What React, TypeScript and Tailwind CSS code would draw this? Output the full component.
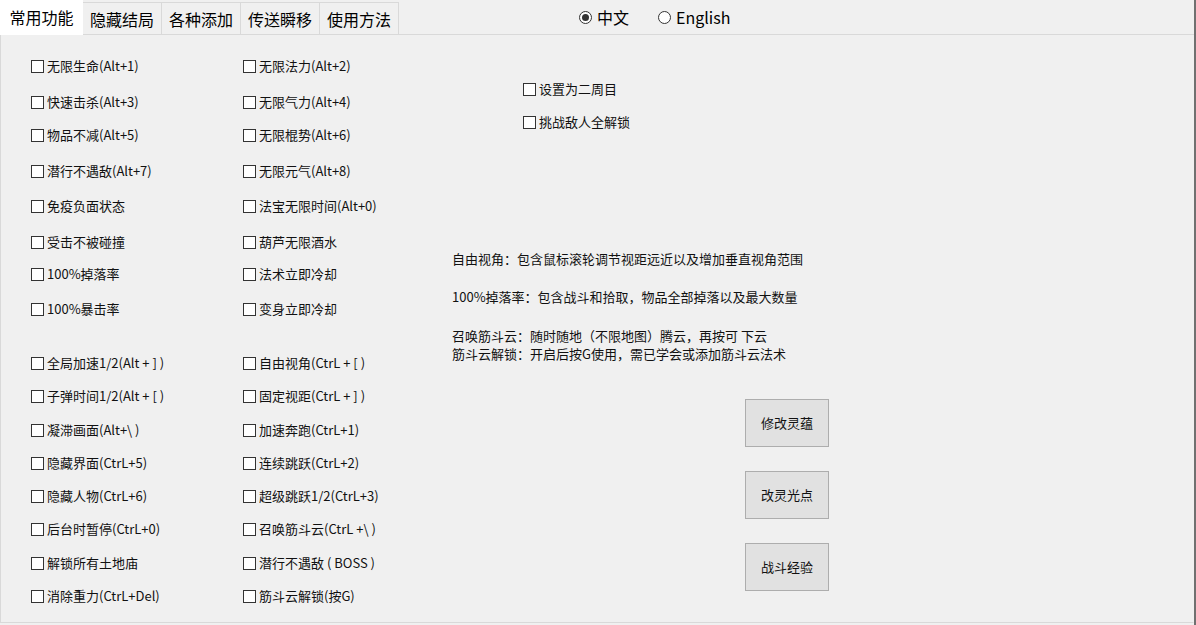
import React from "react";

const font = { fontFamily: '"Noto Sans CJK SC", "Noto Sans", sans-serif' };

const tabs = ["常用功能", "隐藏结局", "各种添加", "传送瞬移", "使用方法"];

// [left, right, top margin]
const rows: [string, string, string][] = [
  ["无限生命(Alt+1)", "无限法力(Alt+2)", "mt-0"],
  ["快速击杀(Alt+3)", "无限气力(Alt+4)", "mt-[16px]"],
  ["物品不减(Alt+5)", "无限棍势(Alt+6)", "mt-[13px]"],
  ["潜行不遇敌(Alt+7)", "无限元气(Alt+8)", "mt-[16px]"],
  ["免疫负面状态", "法宝无限时间(Alt+0)", "mt-[15px]"],
  ["受击不被碰撞", "葫芦无限酒水", "mt-[16px]"],
  ["100%掉落率", "法术立即冷却", "mt-[12px]"],
  ["100%暴击率", "变身立即冷却", "mt-[15px]"],
  ["全局加速1/2(Alt + ] )", "自由视角(CtrL + [ )", "mt-[34px]"],
  ["子弹时间1/2(Alt + [ )", "固定视距(CtrL + ] )", "mt-[13px]"],
  ["凝滞画面(Alt+\\ )", "加速奔跑(CtrL+1)", "mt-[14px]"],
  ["隐藏界面(CtrL+5)", "连续跳跃(CtrL+2)", "mt-[13px]"],
  ["隐藏人物(CtrL+6)", "超级跳跃1/2(CtrL+3)", "mt-[13px]"],
  ["后台时暂停(CtrL+0)", "召唤筋斗云(CtrL +\\ )", "mt-[13px]"],
  ["解锁所有土地庙", "潜行不遇敌 ( BOSS )", "mt-[14px]"],
  ["消除重力(CtrL+Del)", "筋斗云解锁(按G)", "mt-[13px]"],
];

function Check({ label }: { label: string }) {
  return (
    <div className="flex h-5 items-center gap-[3px] text-[13px] text-[#111]">
      <span className="h-[13px] w-[13px] shrink-0 border border-[#333] bg-white" />
      <span className="whitespace-pre">{label}</span>
    </div>
  );
}

function Radio({ label, checked }: { label: string; checked?: boolean }) {
  return (
    <div className="flex items-center gap-[5px] text-[16px] text-black">
      <span className="flex h-[13px] w-[13px] items-center justify-center rounded-full border border-[#333] bg-white">
        {checked && <span className="h-[7px] w-[7px] rounded-full bg-[#333]" />}
      </span>
      <span>{label}</span>
    </div>
  );
}

export default function App() {
  return (
    <div className="h-[625px] w-[1196px] overflow-hidden border-r-2 border-[#707070] bg-[#f0f0f0]" style={font}>
      {/* tab strip */}
      <div className="flex h-[35px] items-end">
        {tabs.map((t, i) =>
          i === 0 ? (
            <div key={t} className="relative z-10 flex h-[35px] w-[83px] items-center justify-center bg-white pb-[1px] text-[16px] text-black">
              {t}
            </div>
          ) : (
            <div
              key={t}
              className="flex h-[33px] w-[79px] items-center justify-center border border-l-0 border-[#d9d9d9] bg-[#f0f0f0] text-[16px] text-black"
            >
              {t}
            </div>
          )
        )}
        <div className="flex h-[35px] flex-1 items-center border-b border-[#d9d9d9]">
          <div className="ml-[180px] flex gap-[29px]">
            <Radio label="中文" checked />
            <Radio label="English" />
          </div>
        </div>
      </div>

      {/* panel */}
      <div className="-mt-px flex h-[589px] border-x border-b border-t border-[#d9d9d9] border-r-transparent bg-[#f0f0f0] pt-[21px]">
        <div className="flex flex-col pl-[30px]">
          {rows.map(([a, b, m]) => (
            <div key={a} className={`flex ${m}`}>
              <div className="w-[212px]">
                <Check label={a} />
              </div>
              <div className="w-[209px]">
                <Check label={b} />
              </div>
            </div>
          ))}
        </div>

        <div className="flex flex-col">
          <div className="ml-[71px] mt-[23px]">
            <Check label="设置为二周目" />
          </div>
          <div className="ml-[71px] mt-[13px]">
            <Check label="挑战敌人全解锁" />
          </div>

          <div className="mt-[118px] text-[13px] leading-[18px] text-[#111]">
            <p>自由视角：包含鼠标滚轮调节视距远近以及增加垂直视角范围</p>
            <p className="mt-[20px]">100%掉落率：包含战斗和拾取，物品全部掉落以及最大数量</p>
            <p className="mt-[21px]">召唤筋斗云：随时随地（不限地图）腾云，再按可 下云</p>
            <p>筋斗云解锁：开启后按G使用，需已学会或添加筋斗云法术</p>
          </div>

          <div className="ml-[293px] mt-[36px] flex flex-col gap-[24px]">
            {["修改灵蕴", "改灵光点", "战斗经验"].map((b) => (
              <button
                key={b}
                className="flex h-[48px] w-[84px] items-center justify-center border border-[#adadad] bg-[#e1e1e1] text-[13px] text-[#111]"
              >
                {b}
              </button>
            ))}
          </div>
        </div>
      </div>
    </div>
  );
}
